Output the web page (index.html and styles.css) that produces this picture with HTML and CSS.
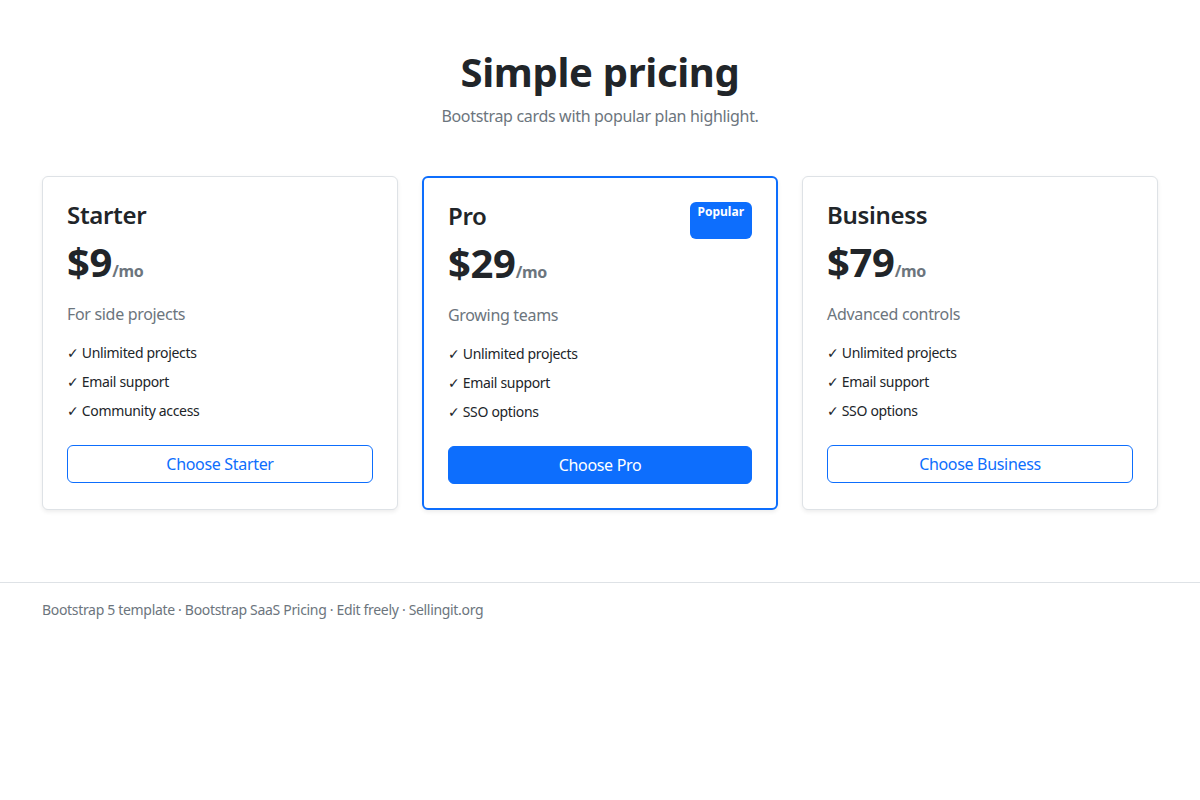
FILE: index.html
```html
<!DOCTYPE html>
<html lang="en">
<head>
    <meta charset="UTF-8">
    <meta name="viewport" content="width=device-width, initial-scale=1.0">
    <title>Bootstrap SaaS Pricing</title>
    <link rel="stylesheet" href="styles.css">
</head>
<body>
    <main class="pricing">
        <div class="container">
            <header class="pricing-header">
                <h1>Simple pricing</h1>
                <p>Bootstrap cards with popular plan highlight.</p>
            </header>

            <div class="plans">
                <div class="plan-card">
                    <div class="plan-top">
                        <h4>Starter</h4>
                    </div>
                    <div class="price">$9<span>/mo</span></div>
                    <p class="plan-desc">For side projects</p>
                    <ul class="features">
                        <li><span class="check">✓</span> Unlimited projects</li>
                        <li><span class="check">✓</span> Email support</li>
                        <li><span class="check">✓</span> Community access</li>
                    </ul>
                    <button class="btn btn-outline">Choose Starter</button>
                </div>

                <div class="plan-card popular">
                    <div class="plan-top">
                        <h4>Pro</h4>
                        <span class="badge">Popular</span>
                    </div>
                    <div class="price">$29<span>/mo</span></div>
                    <p class="plan-desc">Growing teams</p>
                    <ul class="features">
                        <li><span class="check">✓</span> Unlimited projects</li>
                        <li><span class="check">✓</span> Email support</li>
                        <li><span class="check">✓</span> SSO options</li>
                    </ul>
                    <button class="btn btn-primary">Choose Pro</button>
                </div>

                <div class="plan-card">
                    <div class="plan-top">
                        <h4>Business</h4>
                    </div>
                    <div class="price">$79<span>/mo</span></div>
                    <p class="plan-desc">Advanced controls</p>
                    <ul class="features">
                        <li><span class="check">✓</span> Unlimited projects</li>
                        <li><span class="check">✓</span> Email support</li>
                        <li><span class="check">✓</span> SSO options</li>
                    </ul>
                    <button class="btn btn-outline">Choose Business</button>
                </div>
            </div>
        </div>
    </main>

    <footer class="site-footer">
        <div class="container">
            Bootstrap 5 template · Bootstrap SaaS Pricing · Edit freely · Sellingit.org
        </div>
    </footer>
</body>
</html>
```

FILE: styles.css
```css
* {
    box-sizing: border-box;
}

body {
    margin: 0;
    font-family: 'Noto Sans', 'Open Sans', sans-serif;
    font-size: 16px;
    line-height: 1.5;
    letter-spacing: -0.02em;
    color: #212529;
    background: #fff;
}

.container {
    max-width: 1140px;
    margin: 0 auto;
    padding: 0 12px;
}

.pricing {
    padding: 48px 0 72px;
}

.pricing-header {
    text-align: center;
    margin-bottom: 48px;
}

.pricing-header h1 {
    font-size: 40px;
    font-weight: 700;
    line-height: 1.2;
    margin: 0 0 8px;
}

.pricing-header p {
    margin: 0;
    color: #6c757d;
}

.plans {
    display: grid;
    grid-template-columns: repeat(3, 1fr);
    gap: 24px;
}

.plan-card {
    border: 1px solid #dee2e6;
    border-radius: 6px;
    padding: 24px;
    box-shadow: 0 2px 4px rgba(0,0,0,0.075);
    background: #fff;
}

.plan-card.popular {
    border: 2px solid #0d6efd;
}

.plan-top {
    display: flex;
    justify-content: space-between;
}

.plan-top h4 {
    font-size: 24px;
    font-weight: 600;
    line-height: 1.2;
    margin: 0 0 8px;
}

.badge {
    background: #0d6efd;
    color: #fff;
    font-size: 12px;
    font-weight: 700;
    line-height: 1;
    padding: 4px 8px;
    border-radius: 6px;
    letter-spacing: 0;
}

.price {
    font-size: 40px;
    font-weight: 700;
    line-height: 1.2;
    margin-bottom: 16px;
}

.price span {
    font-size: 16px;
    color: #6c757d;
}

.plan-desc {
    color: #6c757d;
    margin: 0 0 16px;
}

.features {
    list-style: none;
    padding: 0;
    margin: 0 0 24px;
    font-size: 14px;
}

.features li {
    height: 21px;
    line-height: 21px;
    margin-bottom: 8px;
}

.check {
    font-family: 'DejaVu Sans', sans-serif;
    line-height: 1;
}

.btn {
    display: block;
    width: 100%;
    font-family: inherit;
    font-size: 16px;
    line-height: 1.5;
    letter-spacing: -0.02em;
    padding: 6px 12px;
    border-radius: 6px;
    border: 1px solid #0d6efd;
    cursor: pointer;
}

.btn-outline {
    background: #fff;
    color: #0d6efd;
}

.btn-primary {
    background: #0d6efd;
    color: #fff;
}

.site-footer {
    border-top: 1px solid #dee2e6;
    padding: 16px 0;
    font-size: 14px;
    color: #6c757d;
}
```
